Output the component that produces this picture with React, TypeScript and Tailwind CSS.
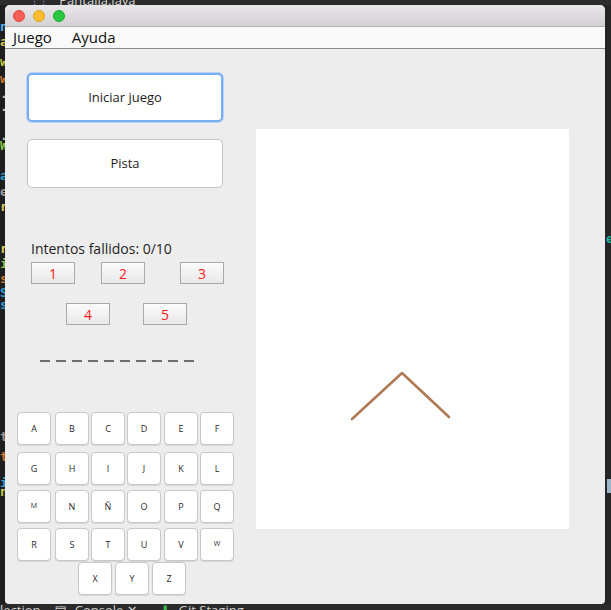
import React from "react";

const font = { fontFamily: '"Open Sans", "DejaVu Sans", sans-serif' };

const leftCode: [number, string, string][] = [
  [27, "n", "#4fb3e8"],
  [42, "a", "#d6c85a"],
  [62, "w", "#c6c94a"],
  [79, "w", "#d0782e"],
  [94, ".", "#bbbbbb"],
  [107, ".", "#bbbbbb"],
  [136, ".", "#bbbbbb"],
  [146, "W", "#8cc34a"],
  [176, "a", "#2e9fd0"],
  [192, "e", "#9a9a9a"],
  [207, "r", "#d6c85a"],
  [249, "r", "#d6c85a"],
  [264, "i", "#8cc34a"],
  [279, "s", "#d0782e"],
  [293, "S", "#2e9fd0"],
  [305, "s", "#2e9fd0"],
  [437, "t", "#9a9a9a"],
  [457, "t", "#d0782e"],
  [483, "i", "#2e9fd0"],
  [492, "n", "#c6c94a"],
];

const rows: string[][] = [
  ["A", "B", "C", "D", "E", "F"],
  ["G", "H", "I", "J", "K", "L"],
  ["M", "N", "Ñ", "O", "P", "Q"],
  ["R", "S", "T", "U", "V", "W"],
];

const Key = ({ l }: { l: string }) => (
  <button
    className={`w-[34px] h-[33px] bg-white border border-[#c8c8c8] rounded-[4px] shadow-[0_1px_0_#d6d6d6] flex items-center justify-center text-[#2a2a2a] ${
      l === "M" || l === "W" ? "text-[7px]" : "text-[9px]"
    }`}
  >
    {l}
  </button>
);

const Box = ({ n }: { n: string }) => (
  <div className="w-[44px] h-[22px] border border-[#a9a9a9] bg-gradient-to-b from-[#fbfbfb] to-[#e9e9e9] flex items-center justify-center text-[14px] text-[#ff1a1a]">
    {n}
  </div>
);

const App = () => {
  const colX = ["ml-0", "ml-[4px]", "ml-[2px]", "ml-[2px]", "ml-[3px]", "ml-[2px]"];
  const rowTop = ["mt-[50px]", "mt-[7px]", "mt-[5px]", "mt-[5px]"];
  return (
    <div className="w-[611px] h-[610px] bg-[#232323] overflow-hidden flex flex-col" style={font}>
      {/* ide tab strip behind the window */}
      <div className="h-[5px] overflow-hidden flex bg-[#2c2c2c]">
        <span className="ml-[33px] -mt-[8px] text-[13px] text-[#8fb0d8]">⬚</span>
        <span className="ml-[14px] -mt-[9px] text-[13px] text-[#d4d4d4]">Pantalla.java</span>
      </div>
      <div className="flex h-[599px]">
        {/* code gutter behind */}
        <div className="w-[5px] overflow-hidden relative bg-[#1e1e1e]">
          {leftCode.map(([y, c, col], i) => (
            <div
              key={i}
              className="absolute left-0 text-[13px] leading-[13px] font-bold"
              style={{ top: y - 12, color: col, fontFamily: '"DejaVu Sans Mono", monospace' }}
            >
              {c}
            </div>
          ))}
        </div>

        {/* window */}
        <div className="w-[600px] h-[599px] rounded-t-[5px] rounded-b-[4px] overflow-hidden bg-[#ededed] flex flex-col">
          <div className="h-[22px] bg-gradient-to-b from-[#e9e7e9] to-[#d3d1d3] border-b border-[#b3b1b3] flex items-center pl-[8px] gap-[8px]">
            <span className="w-[12px] h-[12px] rounded-full bg-[#fc5f57] border border-[#e0443e]" />
            <span className="w-[12px] h-[12px] rounded-full bg-[#fdbc2e] border border-[#dea123]" />
            <span className="w-[12px] h-[12px] rounded-full bg-[#28c840] border border-[#1aab29]" />
          </div>
          <div className="h-[22px] bg-[#f9f9f9] border-b border-[#8d8d8d] flex items-center text-[15px] text-[#111] leading-none">
            <span className="ml-[8px]">Juego</span>
            <span className="ml-[20px]">Ayuda</span>
          </div>

          <div className="flex flex-1">
            {/* left column */}
            <div className="w-[251px] flex flex-col">
              <button className="ml-[22px] mt-[24px] w-[196px] h-[49px] bg-white rounded-[5px] border-2 border-[#78aef0] shadow-[0_0_0_1px_#b7d3f6] text-[13px] text-[#1e1e1e]">
                Iniciar juego
              </button>
              <button className="ml-[22px] mt-[17px] w-[196px] h-[49px] bg-white rounded-[5px] border border-[#c3c3c3] text-[13px] text-[#1e1e1e]">
                Pista
              </button>

              <div className="ml-[26px] mt-[52px] text-[14px] leading-[18px] text-[#1e1e1e]">
                Intentos fallidos: 0/10
              </div>
              <div className="flex mt-[4px] ml-[26px]">
                <Box n="1" />
                <div className="ml-[26px]">
                  <Box n="2" />
                </div>
                <div className="ml-[35px]">
                  <Box n="3" />
                </div>
              </div>
              <div className="flex mt-[19px] ml-[61px]">
                <Box n="4" />
                <div className="ml-[33px]">
                  <Box n="5" />
                </div>
              </div>

              <div className="flex ml-[35px] mt-[35px] gap-[6px]">
                {Array.from({ length: 10 }).map((_, i) => (
                  <span key={i} className="w-[10px] h-[2px] bg-[#6e6e6e]" />
                ))}
              </div>

              {rows.map((r, ri) => (
                <div key={ri} className={`flex ml-[12px] ${rowTop[ri]}`}>
                  {r.map((l, ci) => (
                    <div key={l} className={colX[ci]}>
                      <Key l={l} />
                    </div>
                  ))}
                </div>
              ))}
              <div className="flex ml-[73px] mt-[1px] gap-[3px]">
                <Key l="X" />
                <Key l="Y" />
                <Key l="Z" />
              </div>
            </div>

            {/* drawing canvas */}
            <div className="pt-[80px]">
              <div className="w-[313px] h-[400px] bg-white">
                <svg width="313" height="400" viewBox="0 0 313 400">
                  <polyline
                    points="96,290 146,244 193,288"
                    fill="none"
                    stroke="#b07a56"
                    strokeWidth="2.6"
                    strokeLinecap="round"
                    strokeLinejoin="round"
                  />
                </svg>
              </div>
            </div>
          </div>
        </div>

        {/* right edge of ide behind */}
        <div className="w-[6px] bg-[#262626] relative">
          <span className="absolute left-[1px] top-[224px] text-[13px] text-[#1fb39a] font-bold">e</span>
          <span className="absolute left-[2px] top-[474px] w-[4px] h-[14px] bg-[#9cb6c8]" />
        </div>
      </div>
      {/* ide bottom bar behind */}
      <div className="h-[6px] overflow-hidden flex bg-[#2a2a2a] text-[13px] text-[#cfcfcf]">
        <span className="-mt-[3px] ml-[0px]">lection</span>
        <span className="-mt-[3px] ml-[14px]">▤</span>
        <span className="-mt-[3px] ml-[8px]">Console ✕</span>
        <span className="-mt-[3px] ml-[22px] text-[#3dbb4a]">⬇</span>
        <span className="-mt-[3px] ml-[8px]">Git Staging</span>
      </div>
    </div>
  );
};

export default App;
